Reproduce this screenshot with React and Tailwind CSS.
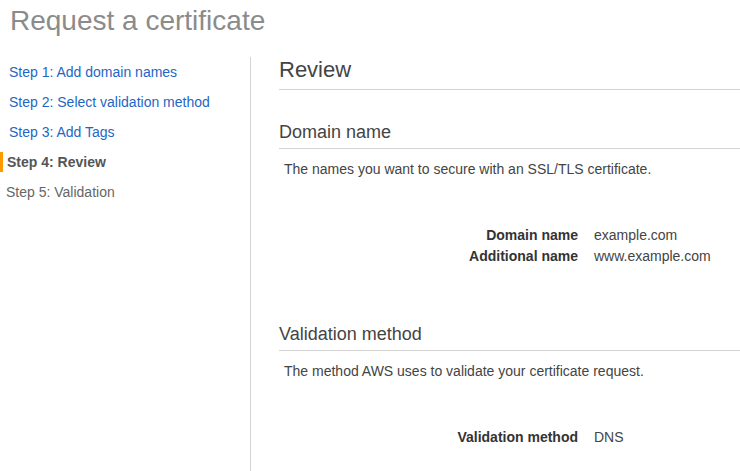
export default function App() {
  const font = { fontFamily: '"Liberation Sans", Arial, sans-serif' };
  const Row = ({ label, value }) => (
    <div className="flex h-[21px] items-center text-[14px] leading-[21px]">
      <div className="w-[299px] text-right font-bold text-[#333]">{label}</div>
      <div className="ml-4 text-[#444]">{value}</div>
    </div>
  );
  return (
    <div className="w-[740px] h-[471px] overflow-hidden bg-white" style={font}>
      <h1 className="pl-[10px] pt-[4px] text-[28px] leading-[34px] text-[#8b8b8b] font-normal mb-[19px]">
        Request a certificate
      </h1>
      <div className="flex h-[414px]">
        <nav className="w-[251px] shrink-0 border-r border-[#d4d4d4] text-[14px]">
          <div className="h-[30px] flex items-center pl-[9px] text-[#1e66c4]">Step 1: Add domain names</div>
          <div className="h-[30px] flex items-center pl-[9px] text-[#1e66c4]">Step 2: Select validation method</div>
          <div className="h-[30px] flex items-center pl-[9px] text-[#1e66c4]">Step 3: Add Tags</div>
          <div className="h-[30px] flex items-center relative pl-[7px] font-bold text-[#555]">
            <span className="absolute left-0 top-[5px] w-[3px] h-[20px] bg-[#f90]"></span>
            Step 4: Review
          </div>
          <div className="h-[30px] flex items-center pl-[6px] text-[#666]">Step 5: Validation</div>
        </nav>
        <main className="flex-1 pl-[28px]">
          <h2 className="text-[22px] leading-[26px] text-[#444] pb-[6px] border-b border-[#d4d4d4]">Review</h2>

          <h3 className="mt-[31px] text-[18px] leading-[22px] text-[#444] pb-[5px] border-b border-[#d4d4d4]">Domain name</h3>
          <p className="mt-[10px] pl-[5px] text-[14px] leading-[20px] text-[#444]">
            The names you want to secure with an SSL/TLS certificate.
          </p>
          <div className="mt-[46px]">
            <Row label="Domain name" value="example.com" />
            <Row label="Additional name" value="www.example.com" />
          </div>

          <h3 className="mt-[56px] text-[18px] leading-[22px] text-[#444] pb-[5px] border-b border-[#d4d4d4]">Validation method</h3>
          <p className="mt-[10px] pl-[5px] text-[14px] leading-[20px] text-[#444]">
            The method AWS uses to validate your certificate request.
          </p>
          <div className="mt-[46px]">
            <Row label="Validation method" value="DNS" />
          </div>
        </main>
      </div>
    </div>
  );
}
